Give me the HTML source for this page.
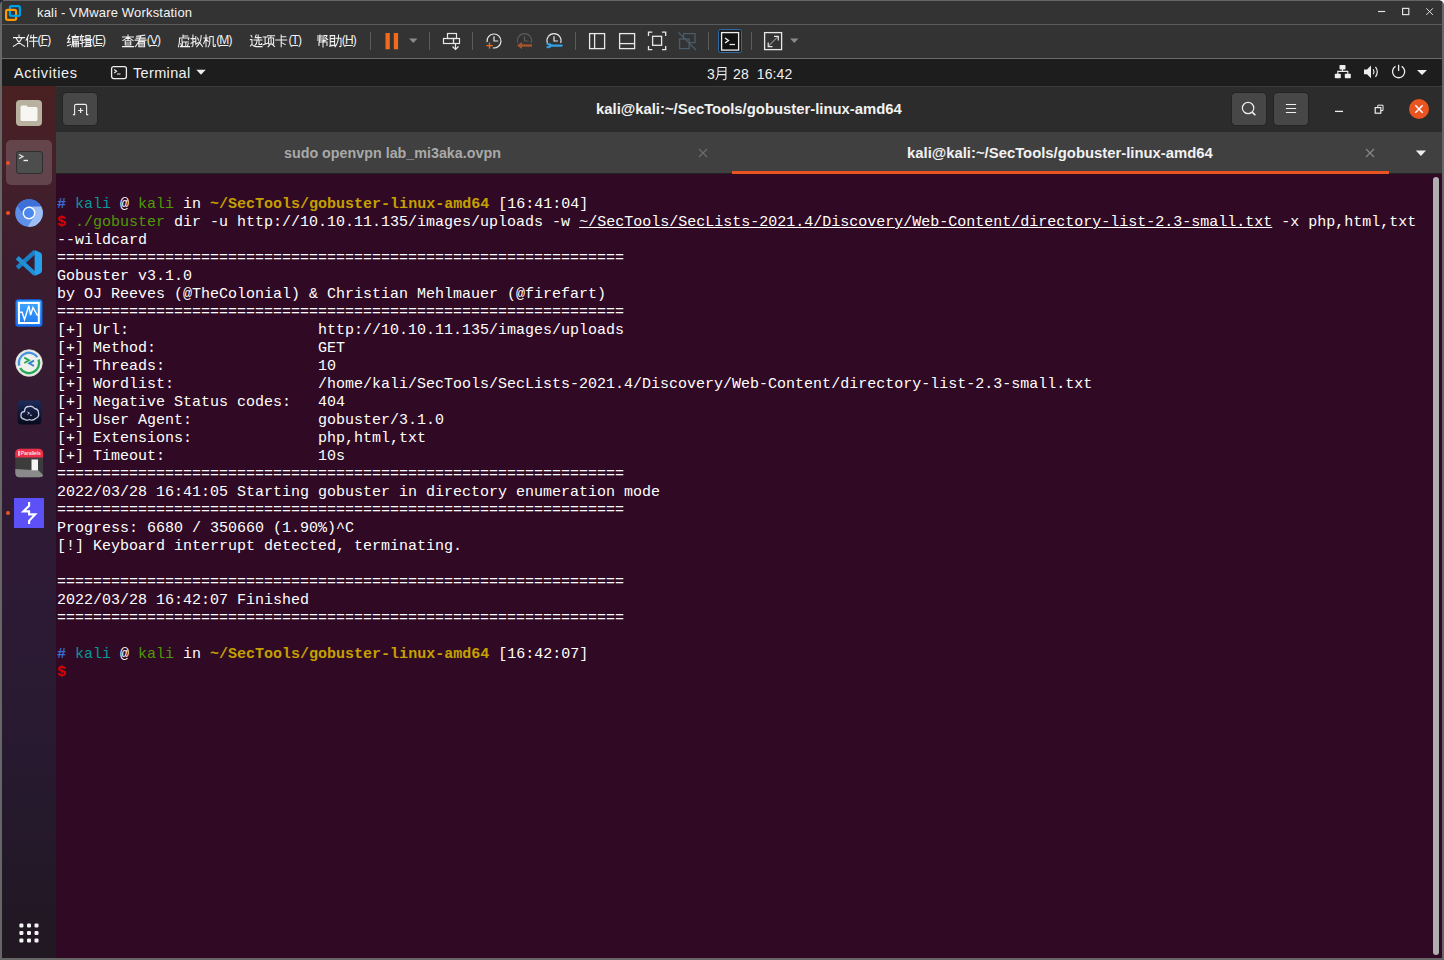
<!DOCTYPE html>
<html><head><meta charset="utf-8">
<style>
*{margin:0;padding:0;box-sizing:border-box}
html,body{width:1444px;height:960px;overflow:hidden;background:#666}
body{position:relative;font-family:"Liberation Sans",sans-serif;color:#fff}
.a{position:absolute}
#titlebar{left:2px;top:1px;width:1440px;height:23px;background:#333}
#sep1{left:2px;top:24px;width:1440px;height:1px;background:#5a5a5a}
#menubar{left:2px;top:25px;width:1440px;height:33px;background:#333}
#sep2{left:2px;top:58px;width:1440px;height:1px;background:#6a6a6a}
#gnome{left:2px;top:59px;width:1440px;height:27px;background:#1d1d1d}
#dock{left:2px;top:86px;width:54px;height:872px;background:linear-gradient(#4a2021 0%,#452029 8%,#3b1c2e 20%,#321a33 42%,#2e1a35 55%,#26192e 80%,#211822 100%)}
#header{left:56px;top:86px;width:1386px;height:46px;background:#2c2c2c}
#tabs{left:56px;top:132px;width:1386px;height:41px;background:#404040}
#term{left:56px;top:173px;width:1386px;height:785px;background:#300a24}
.t{font-family:"Liberation Mono",monospace;font-size:15px;letter-spacing:0px;line-height:18px;white-space:pre;color:#fff}
#txt{left:57px;top:196px}
.pb{color:#3a6cd0;font-weight:bold}.pc{color:#06989a}.pg{color:#4e9a06}.py{color:#c4a000;font-weight:bold}.pr{color:#dc0000;font-weight:bold}
u{text-decoration:underline;text-underline-offset:1px}
.ui{font-family:"Liberation Sans",sans-serif;white-space:pre;line-height:normal}
.menu{font-size:13px;color:#f2f2f2}
.cj{display:inline-block;overflow:hidden;vertical-align:top;white-space:nowrap}
.par{font-size:12px;color:#f2f2f2;letter-spacing:-0.9px}
.par u{text-decoration:underline;text-underline-offset:1px}
.menu u{text-decoration:underline;text-underline-offset:1px}
.btn{background:#474747;border-radius:4px;box-shadow:0 0 0 1px rgba(0,0,0,0.18)}
.dot{left:5.8px;width:4px;height:4px;border-radius:2px;background:#e95420}
</style></head><body>
<div class="a" id="titlebar"></div>
<div class="a" id="sep1"></div>
<div class="a" id="menubar"></div>
<div class="a" id="sep2"></div>
<div class="a" id="gnome"></div>
<div class="a" id="dock"></div>
<div class="a" id="header"></div>
<div class="a" id="tabs"></div>
<div class="a" style="left:56px;top:86px;width:1386px;height:1px;background:#3c3c3c"></div>
<div class="a" id="term"></div>
<div class="a t" id="txt"><span class="pb">#</span> <span class="pc">kali</span> @ <span class="pg">kali</span> in <span class="py">~/SecTools/gobuster-linux-amd64</span> [16:41:04]
<span class="pr">$</span> <span class="pg">./gobuster</span> dir -u http://10.10.11.135/images/uploads -w <u>~/SecTools/SecLists-2021.4/Discovery/Web-Content/directory-list-2.3-small.txt</u> -x php,html,txt
--wildcard
===============================================================
Gobuster v3.1.0
by OJ Reeves (@TheColonial) &amp; Christian Mehlmauer (@firefart)
===============================================================
[+] Url:                     http://10.10.11.135/images/uploads
[+] Method:                  GET
[+] Threads:                 10
[+] Wordlist:                /home/kali/SecTools/SecLists-2021.4/Discovery/Web-Content/directory-list-2.3-small.txt
[+] Negative Status codes:   404
[+] User Agent:              gobuster/3.1.0
[+] Extensions:              php,html,txt
[+] Timeout:                 10s
===============================================================
2022/03/28 16:41:05 Starting gobuster in directory enumeration mode
===============================================================
Progress: 6680 / 350660 (1.90%)^C
[!] Keyboard interrupt detected, terminating.

===============================================================
2022/03/28 16:42:07 Finished
===============================================================

<span class="pb">#</span> <span class="pc">kali</span> @ <span class="pg">kali</span> in <span class="py">~/SecTools/gobuster-linux-amd64</span> [16:42:07]
<span class="pr">$</span></div>

<!-- VMware title -->
<svg class="a" style="left:1438px;top:0" width="6" height="6" viewBox="0 0 6 6"><path d="M1.5 0 H6 V5 Q6 1.5 1.5 0 Z" fill="#f4f4f4"/></svg>
<svg class="a" style="left:0;top:0" width="28" height="24" viewBox="0 0 28 24">
<path d="M0 0 H3.5 Q1.2 1.2 0 3.5 Z" fill="#1e2430"/>
<rect x="9.9" y="6.1" width="10" height="9.8" rx="1.6" fill="none" stroke="#00a0e6" stroke-width="2.2"/>
<rect x="6.1" y="9.9" width="10" height="10" rx="1.6" fill="none" stroke="#ff9a00" stroke-width="2.2"/>
<path d="M14.6 15.9 H18.2" stroke="#00a0e6" stroke-width="2.2"/>
</svg>
<div class="a ui" style="left:37px;top:4.5px;font-size:13px;letter-spacing:0.18px;color:#f4f4f4">kali - VMware Workstation</div>
<svg class="a" style="left:1376px;top:5px" width="60" height="14" viewBox="0 0 60 14">
<path d="M2 6.5 H9.2" stroke="#e0e0e0" stroke-width="1.2"/>
<rect x="26.6" y="3.4" width="6.2" height="6.2" fill="none" stroke="#e0e0e0" stroke-width="1.2"/>
<path d="M50.3 3.3 L56.9 9.9 M56.9 3.3 L50.3 9.9" stroke="#e0e0e0" stroke-width="1"/>
</svg>
<!-- menu -->
<svg class="a" style="left:13.3px;top:35px;overflow:visible" width="27" height="13" viewBox="0 0 27 13"><g fill="none" stroke="#f2f2f2" stroke-width="1.05" stroke-linecap="square"><path transform="translate(0.00 0) scale(1.0)" d="M6 0 V1.6 M0.5 2.6 H11.5 M3 2.8 Q5.5 8.5 11.6 11.2 M9 2.8 Q6.5 8.5 0.4 11.2"/><path transform="translate(12.60 0) scale(1.0)" d="M3 0 L0.4 5.2 M2 3 V11.8 M5.6 0.4 L4.6 3.2 M5 2.6 H11.2 M4 6.2 H12 M8 0 V11.8"/></g></svg>
<div class="a ui par" style="left:37.6px;top:33px">(<u>F</u>)</div>
<svg class="a" style="left:67.3px;top:35px;overflow:visible" width="27" height="13" viewBox="0 0 27 13"><g fill="none" stroke="#f2f2f2" stroke-width="1.05" stroke-linecap="square"><path transform="translate(0.00 0) scale(1.0)" d="M2.6 0 L0.6 3.6 H3 L0.6 7.6 L3.6 7 M0.5 10.8 L3.8 9.4 M8.2 0 V1.2 M5 1.6 H11.6 M5.6 2.8 H11 V4.8 H5.6 M5.6 2.8 V7 Q5.5 10 4.6 11.8 M6.6 6.2 H11.4 V11.8 M6.6 6.2 V11.8 M8.2 6.2 V11.8 M9.8 6.2 V11.8 M6.6 8.8 H11.4"/><path transform="translate(12.60 0) scale(1.0)" d="M0.5 1.6 H4.2 M2 0 L0.6 5.2 H4.2 M2.6 3.2 V11.8 M0.4 8.4 L4.6 7.6 M6.2 0.6 H10.6 V3.2 H6.2 Z M5 4.6 H12 M6.4 5.8 H11 V11.4 M6.4 5.8 V11.4 M6.4 7.6 H11 M6.4 9.5 H11 M4.8 11.6 L12 10.8"/></g></svg>
<div class="a ui par" style="left:91.8px;top:33px">(<u>E</u>)</div>
<svg class="a" style="left:122.3px;top:35px;overflow:visible" width="27" height="13" viewBox="0 0 27 13"><g fill="none" stroke="#f2f2f2" stroke-width="1.05" stroke-linecap="square"><path transform="translate(0.00 0) scale(1.0)" d="M0.5 2 H11.5 M6 0 V5.2 M5.6 2.4 L0.8 5.6 M6.4 2.4 L11.2 5.6 M3.2 5.8 H8.8 V10 H3.2 Z M3.2 7.9 H8.8 M0.5 11.6 H11.5"/><path transform="translate(12.60 0) scale(1.0)" d="M10.2 0.2 L2 1.2 M1.6 3.1 H10.6 M0.5 5.1 H11.5 M6.2 1 Q4.5 7.5 0.8 11.6 M4.2 6.6 H10 V11.7 H4.2 Z M4.2 8.3 H10 M4.2 10 H10"/></g></svg>
<div class="a ui par" style="left:146.8px;top:33px">(<u>V</u>)</div>
<svg class="a" style="left:178.3px;top:35px;overflow:visible" width="40" height="13" viewBox="0 0 40 13"><g fill="none" stroke="#f2f2f2" stroke-width="1.05" stroke-linecap="square"><path transform="translate(0.00 0) scale(1.0)" d="M5 0 V2 M5 1 H9.8 M1.6 3 H11 L10.4 4.6 M1.6 3 Q1.6 8.5 0.4 11.8 M4 4.6 V7 H10.4 M4.4 8 V11.2 M7.8 8 V11.2 M2.8 8.6 L3.4 10.6 M10.2 8.6 L9.6 10.6 M2.4 11.6 H11.6"/><path transform="translate(12.60 0) scale(1.0)" d="M0.5 3.6 H4 M2.3 0 V10.8 L1.4 11.6 M0.4 8.2 L4.2 6.6 M5.2 1.6 V9.2 L7.6 7.6 M7 3 L7.9 5 M10.6 0.4 Q10.6 7 6 11.8 M9.4 8 L12 11.6"/><path transform="translate(25.20 0) scale(1.0)" d="M0.5 3 H5 M2.8 0 V11.8 M2.6 3.6 L0.4 8.6 M3 4.2 L5 6.4 M6.6 1.4 H10 V10.4 Q10 11.4 11 11.4 H12 V9.4 M6.6 1.4 V7 Q6.4 10 5 11.8"/></g></svg>
<div class="a ui par" style="left:216.2px;top:33px">(<u>M</u>)</div>
<svg class="a" style="left:250.3px;top:35px;overflow:visible" width="40" height="13" viewBox="0 0 40 13"><g fill="none" stroke="#f2f2f2" stroke-width="1.05" stroke-linecap="square"><path transform="translate(0.00 0) scale(1.0)" d="M1 0.4 L2 2 M0.4 4.6 H2 V9.2 L0.4 11 M2 9.6 Q3.6 11.6 6 11.6 H12 M6.2 0 L5.2 2.6 M5.4 2.6 H11 M8.2 0 V5 M4 5 H12 M7 5.4 Q7 9 5 10.2 M9 5.4 V9.4 H11.6 V8.4"/><path transform="translate(12.60 0) scale(1.0)" d="M0.5 2 H4.6 M2.5 2 V9 M0.4 9.8 L5 8.2 M5 0.8 H12 M8.6 0.8 L7.8 3 M6 3 H11 V9 H6 Z M8.5 4.6 V8.6 M7.6 9.4 L5.4 11.8 M9.6 9.4 L12 11.6"/><path transform="translate(25.20 0) scale(1.0)" d="M6 0 V11.8 M6 1.8 H10.6 M0.5 5 H11.5 M6 7.4 L10 9.6"/></g></svg>
<div class="a ui par" style="left:288.4px;top:33px">(<u>T</u>)</div>
<svg class="a" style="left:317.3px;top:35px;overflow:visible" width="27" height="13" viewBox="0 0 27 13"><g fill="none" stroke="#f2f2f2" stroke-width="1.05" stroke-linecap="square"><path transform="translate(0.00 0) scale(1.0)" d="M0.5 1 H5.6 M0.5 3 H5.6 M0.4 5 H6 M3 0 L2.6 6 M7 0.4 V6.4 M7 0.4 H10 L8.6 3 L10.6 4.4 L8 5.4 M2 7 V10.4 M2 7 H10 V10.4 M6 5.6 V12"/><path transform="translate(12.60 0) scale(1.0)" d="M0.6 0.6 H5 V10.2 H0.6 Z M0.6 3.6 H5 M0.6 6.6 H5 M0 11.2 L6 10.2 M6.4 3.2 H11.4 V11 Q11.4 11.8 10 11.6 M9 0 Q9 7.5 5.4 11.8"/></g></svg>
<div class="a ui par" style="left:341.8px;top:33px">(<u>H</u>)</div>
<svg class="a" style="left:360px;top:25px" width="450" height="32" viewBox="360 25 450 32">
<g stroke="#5a5a5a" stroke-width="1"><path d="M370.5 32 V50 M429.5 32 V50 M472.5 32 V50 M575.5 32 V50 M708.5 32 V50 M751.5 32 V50"/></g>
<rect x="385.5" y="33" width="4.3" height="16.3" fill="#f26b1d"/>
<rect x="393.8" y="33" width="4.3" height="16.3" fill="#f26b1d"/>
<path d="M409 38.5 H417.5 L413.25 43 Z" fill="#8a8a8a"/>
<path d="M797 38.5 H805.5 L801.25 43 Z" fill="#8a8a8a" transform="translate(-7 0)"/>
<!-- ctrl alt del -->
<g fill="none" stroke="#e8e8e8" stroke-width="1.2">
<rect x="447.5" y="33.5" width="9" height="5"/>
<rect x="443.5" y="38.5" width="10" height="5"/>
<rect x="453.5" y="38.5" width="6" height="5"/>
<path d="M455.5 44 V49.5 M452.5 46.5 L455.5 49.5 L458.5 46.5"/>
</g>
<!-- snapshot -->
<g fill="none" stroke="#e8e8e8" stroke-width="1.2">
<path d="M487.1 42.2 A7 7 0 1 1 492.8 47.9"/><path d="M494 36.3 V41 H498.2"/>
</g>
<path d="M486.3 45.6 H492.7 M489.5 42.4 V48.8" stroke="#f26b1d" stroke-width="1.3"/>
<g fill="none" stroke="#5a5a5a" stroke-width="1.2">
<path d="M517.9 42.9 A7 7 0 1 1 531.1 42.9"/><path d="M524.5 36.3 V41 H528.5"/>
</g>
<path d="M521 45.5 H532" stroke="#a8532a" stroke-width="2.4"/><path d="M517 45.5 L522 42 V49 Z" fill="#a8532a"/>
<g fill="none" stroke="#e8e8e8" stroke-width="1.2">
<path d="M547.4 42.9 A7 7 0 1 1 560.6 42.9"/><path d="M554 36.3 V41 H558"/>
</g>
<path d="M550 45.6 H561.5" stroke="#2fa3e6" stroke-width="2.4" stroke-linecap="round"/><path d="M546.6 44 Q550.5 43.6 551 45.6 Q550.5 47.6 546.6 47.2" stroke="#2fa3e6" stroke-width="1.9" fill="none"/>
<!-- view icons -->
<g fill="none" stroke="#e8e8e8" stroke-width="1.3">
<rect x="589.6" y="33.6" width="15" height="15"/><path d="M594.6 33.6 V48.6"/>
<rect x="619.6" y="33.6" width="15" height="15"/><path d="M619.6 43.6 H634.6"/>
<path d="M648.5 36 V32.2 H652.3 M662 32.2 H665.7 V36 M665.7 46 V49.7 H662 M652.3 49.7 H648.5 V46"/>
<rect x="652.6" y="36.3" width="9" height="9"/>
</g>
<g fill="none" stroke="#4a5c6c" stroke-width="1.3">
<path d="M683.5 38.8 V33.6 H695 V42.6 H689.3"/><rect x="679.6" y="39" width="9.6" height="9.6"/><path d="M678.5 32.5 L696 50"/>
</g>
<rect x="718.5" y="29.5" width="23" height="23" rx="2" fill="#1d1d1d" stroke="#2d6ba6" stroke-width="1"/>
<rect x="721.6" y="32.6" width="17" height="17.5" fill="#111" stroke="#eee" stroke-width="1.3"/>
<path d="M725 38 L728.5 40.5 L725 43" fill="none" stroke="#eee" stroke-width="1.4"/><path d="M729.5 44.5 H735" stroke="#eee" stroke-width="1.2"/>
<g fill="none" stroke="#e8e8e8" stroke-width="1.3">
<rect x="764.6" y="32.6" width="17" height="17"/>
</g>
<path d="M768.5 46 L777.8 36.8" stroke="#bbb" stroke-width="1"/>
<path d="M774 36.3 H778.3 V40.6 M768.2 42.5 V46.7 H772.5" fill="none" stroke="#e8e8e8" stroke-width="1.2"/>
</svg>
<!-- gnome bar -->
<div class="a ui" style="left:14px;top:65px;font-size:14.5px;letter-spacing:0.65px;color:#f0f0f0">Activities</div>
<svg class="a" style="left:110px;top:65px" width="18" height="15" viewBox="0 0 18 15">
<rect x="1.6" y="1.6" width="14.8" height="12" rx="2" fill="none" stroke="#eee" stroke-width="1.3"/>
<path d="M4.2 4.5 L6.6 6.3 L4.2 8" fill="none" stroke="#eee" stroke-width="1.1"/><path d="M7 9 H10.5" stroke="#eee" stroke-width="1"/>
</svg>
<div class="a ui" style="left:133px;top:65px;font-size:14.5px;letter-spacing:0.35px;color:#f0f0f0">Terminal</div>
<svg class="a" style="left:195px;top:69px" width="12" height="7" viewBox="0 0 12 7"><path d="M1.3 0.7 H10.7 L6 5.8 Z" fill="#eee"/></svg>
<div class="a ui" style="left:707px;top:65.6px;font-size:14px;color:#f0f0f0">3</div>
<svg class="a" style="left:715px;top:67px" width="13" height="14" viewBox="0 0 13 14"><path d="M3 0.5 V7 Q3 10.5 0.6 12.8 M3 0.5 H10.9 V11.6 Q10.9 12.9 7.8 12.7 M3 4.3 H10.9 M3 7.6 H10.9" fill="none" stroke="#f0f0f0" stroke-width="1.1"/></svg>
<div class="a ui" style="left:733px;top:65.6px;font-size:14px;color:#f0f0f0;letter-spacing:0.1px">28&nbsp; 16:42</div>
<svg class="a" style="left:1330px;top:62px" width="104" height="20" viewBox="1330 62 104 20">
<g fill="#eee">
<rect x="1339.5" y="65" width="6" height="4.5" rx="0.8"/>
<rect x="1334.8" y="73.8" width="6" height="4.5" rx="0.8"/>
<rect x="1344.8" y="73.8" width="6" height="4.5" rx="0.8"/>
</g>
<path d="M1342.5 69 V71.4 M1337.8 74 V71.4 H1347.8 V74" fill="none" stroke="#eee" stroke-width="1.1"/>
<path d="M1364 69.5 H1367 L1371 65.5 V78.2 L1367 74.2 H1364 Z" fill="#eee"/>
<path d="M1373.2 69.3 Q1374.8 71.8 1373.2 74.3 M1375.5 66.8 Q1379 71.8 1375.5 76.8" fill="none" stroke="#eee" stroke-width="1.2"/>
<path d="M1395.5 66.4 A6.1 6.1 0 1 0 1401.7 66.4" fill="none" stroke="#eee" stroke-width="1.3"/>
<path d="M1398.6 64.8 V71" stroke="#eee" stroke-width="1.3"/>
<path d="M1417 70 H1427 L1422 75 Z" fill="#eee"/>
</svg>
<!-- header bar -->
<div class="a btn" style="left:63px;top:93px;width:34px;height:32px"></div>
<svg class="a" style="left:63px;top:93px" width="34" height="32" viewBox="0 0 34 32">
<path d="M9.9 21.6 H11.6 V13 Q11.6 11.4 13.2 11.4 H22 Q23.6 11.4 23.6 13 V21.6 H25.3" fill="none" stroke="#eee" stroke-width="1.1"/>
<path d="M17.6 14.9 V20.1 M15 17.5 H20.2" stroke="#eee" stroke-width="1.2"/>
</svg>
<div class="a ui" style="left:596px;top:101px;font-size:14.85px;font-weight:bold;color:#f2f2f2">kali@kali:~/SecTools/gobuster-linux-amd64</div>
<div class="a btn" style="left:1232px;top:93px;width:34px;height:32px"></div>
<div class="a btn" style="left:1274px;top:93px;width:34px;height:32px"></div>
<svg class="a" style="left:1232px;top:93px" width="200" height="32" viewBox="1232 93 200 32">
<circle cx="1248.1" cy="108" r="5.7" fill="none" stroke="#eee" stroke-width="1.2"/>
<path d="M1252.2 112.1 L1255.4 115.3" stroke="#eee" stroke-width="1.6"/>
<path d="M1285.9 104.5 H1296.1 M1285.9 108.5 H1296.1 M1285.9 112.5 H1296.1" stroke="#f0f0f0" stroke-width="1.1"/>
<path d="M1335 111.4 H1343" stroke="#eee" stroke-width="1.3"/>
<rect x="1375.2" y="107.6" width="5.6" height="5.6" fill="none" stroke="#eee" stroke-width="1.2"/>
<path d="M1377.8 107.6 V105.2 H1383 V110.6 H1380.8" fill="none" stroke="#eee" stroke-width="1"/>
<circle cx="1419" cy="109" r="10" fill="#e95420"/>
<path d="M1415.3 105.3 L1422.7 112.7 M1422.7 105.3 L1415.3 112.7" stroke="#fff" stroke-width="1.5"/>
</svg>
<!-- tabs -->
<div class="a ui" style="left:284px;top:145px;font-size:14.3px;font-weight:bold;color:#a9a9a9">sudo openvpn lab_mi3aka.ovpn</div>
<div class="a ui" style="left:907px;top:145px;font-size:14.85px;font-weight:bold;color:#f2f2f2">kali@kali:~/SecTools/gobuster-linux-amd64</div>
<svg class="a" style="left:690px;top:140px" width="750" height="34" viewBox="690 140 750 34">
<path d="M699 149 L707 157 M707 149 L699 157" stroke="#6d6d6d" stroke-width="1.1"/>
<path d="M1366 149 L1374 157 M1374 149 L1366 157" stroke="#8a8a8a" stroke-width="1.1"/>
<path d="M1415.8 150.4 H1426 L1420.9 155.9 Z" fill="#eee"/>
<rect x="732" y="171" width="657" height="3" fill="#e95420"/>
</svg>
<div class="a" style="left:56px;top:173px;width:676px;height:1px;background:#222"></div>
<div class="a" style="left:1389px;top:173px;width:53px;height:1px;background:#222"></div>
<!-- scrollbar -->
<div class="a" style="left:1433px;top:177px;width:6px;height:778px;border-radius:3px;background:#b0b0b0"></div>
<!-- dock -->
<div class="a" style="left:16px;top:100px;width:26px;height:26px;border-radius:4px;background:#b9b19f"></div>
<svg class="a" style="left:16px;top:100px" width="26" height="26" viewBox="0 0 26 26">
<path d="M4.5 7 Q4.5 5.5 6 5.5 H10.5 L12 7 H20 Q21.5 7 21.5 8.5 V19.5 Q21.5 21 20 21 H6 Q4.5 21 4.5 19.5 Z" fill="#f7f6f3"/>
</svg>
<div class="a" style="left:6px;top:140px;width:46px;height:45px;border-radius:5px;background:rgba(255,255,255,0.17)"></div>
<div class="a" style="left:15.5px;top:151px;width:27px;height:23px;border-radius:3px;background:#4d4d4d;border:1px solid #2e2e2e"></div>
<svg class="a" style="left:15px;top:151px" width="28" height="23" viewBox="0 0 28 23">
<path d="M4 3.5 L8 5.6 L4 7.7" fill="none" stroke="#ddd" stroke-width="1.3"/><path d="M8.5 9.5 H13" stroke="#eee" stroke-width="1.4"/>
</svg>
<div class="a dot" style="top:161px"></div>


<!-- dock icons -->
<div class="a dot" style="top:211px"></div>
<svg class="a" style="left:15px;top:199px" width="28" height="28" viewBox="0 0 28 28">
<circle cx="14" cy="14" r="13.8" fill="#5f90e9"/>
<path d="M2.25 6.77 A13.8 13.8 0 0 1 26.22 7.59 L14 7.7 L8.3 15.5 Z" fill="#3f70d8"/>
<path d="M26.22 7.59 A13.8 13.8 0 0 1 12.80 27.75 L18.2 19.1 L14 7.7 Z" fill="#9dbef4"/>
<circle cx="14" cy="14" r="6.4" fill="#fff"/>
<circle cx="14" cy="14" r="5" fill="#4a88ee"/>
</svg>
<svg class="a" style="left:15px;top:249px" width="28" height="28" viewBox="0 0 28 28">
<path d="M2.2 18.8 L20 2.5" stroke="#1a7fc4" stroke-width="4.4"/>
<path d="M2.2 8.6 L20 25" stroke="#1f8fd6" stroke-width="4.4"/>
<path d="M19.6 1 L25.2 3.6 Q27 4.4 27 6.4 V21.6 Q27 23.6 25.2 24.4 L19.6 27 Z" fill="#24a0ee"/>
</svg>
<svg class="a" style="left:15px;top:299px" width="28" height="28" viewBox="0 0 28 28">
<defs><linearGradient id="mg" x1="0" y1="0" x2="0" y2="1"><stop offset="0" stop-color="#42aaff"/><stop offset="1" stop-color="#1f78f0"/></linearGradient></defs>
<rect x="0.3" y="0.2" width="27.2" height="27.6" rx="3" fill="#1565e8"/>
<rect x="1.5" y="1.5" width="24.8" height="25" rx="2" fill="url(#mg)"/>
<rect x="4" y="4" width="19.8" height="20" fill="none" stroke="#fff" stroke-width="2"/>
<path d="M4.4 13.2 H7.2 L9.5 20.7 L13.8 6.7 L15.6 16 L18 8.5 L22.2 16 H24" fill="none" stroke="#fff" stroke-width="1.4" stroke-linejoin="miter"/>
</svg>
<svg class="a" style="left:15px;top:349px" width="28" height="28" viewBox="0 0 28 28">
<circle cx="14" cy="14" r="13.3" fill="#eef0ea" stroke="#d6d8d2" stroke-width="0.8"/>
<path d="M4.15 16.64 A10.2 10.2 0 0 1 22.36 8.15" fill="none" stroke="#4a94e0" stroke-width="2.4"/>
<path d="M23.58 10.51 A10.2 10.2 0 0 1 5.17 19.10" fill="none" stroke="#2aa85a" stroke-width="2.4"/>
<path d="M9.3 8.6 L14 11.3 L9.3 14" fill="none" stroke="#2aa85a" stroke-width="1.9"/>
<path d="M19 11.6 L14.2 14.3 L19 17" fill="none" stroke="#3a7fd6" stroke-width="1.9"/>
</svg>
<svg class="a" style="left:17px;top:400px" width="25" height="25" viewBox="0 0 25 25">
<defs><linearGradient id="cg" x1="0" y1="0" x2="0" y2="1"><stop offset="0" stop-color="#1d2b5a"/><stop offset="1" stop-color="#060a1c"/></linearGradient></defs>
<rect x="0.5" y="0.5" width="24" height="24" rx="4" fill="url(#cg)"/>
<path d="M7 19 Q3.5 18.5 4 14.5 Q4.5 11.5 7.5 11.5 Q7.5 6.5 12 6.5 Q15.5 5.5 17.5 8.5 Q21.5 9 21.5 13 Q22.5 17 18.5 18.5 Q16 21 12.5 19.5 Q9.5 21 7 19 Z" fill="none" stroke="#c9cde0" stroke-width="1.3"/>
<path d="M10.5 12 L12.5 13.2 L10.5 14.4 M13 15.2 H14.8" stroke="#c9cde0" stroke-width="1" fill="none"/>
</svg>
<svg class="a" style="left:15px;top:448px" width="29" height="30" viewBox="0 0 29 30">
<rect x="0.3" y="0.8" width="27.8" height="28.4" rx="4.5" fill="#3c3c3c"/>
<path d="M0.3 21 L16.5 22 H23 L28.1 27 Q28 29.2 24 29.2 H4.5 Q0.3 29.2 0.3 25 Z" fill="#8a8a8a"/>
<path d="M0.3 9.5 V5.3 Q0.3 0.8 4.8 0.8 H23.6 Q28.1 0.8 28.1 5.3 V9.5 Z" fill="#ec2e4a"/>
<rect x="3.3" y="2.8" width="1.3" height="5" fill="#fff"/>
<text x="5.6" y="7.4" font-family="Liberation Sans" font-size="5.4" fill="#fff" textLength="20">Parallels</text>
<rect x="16.5" y="11.5" width="6.5" height="10.8" fill="#f4f4f4"/>
</svg>
<div class="a dot" style="top:511px"></div>
<svg class="a" style="left:14px;top:498px" width="30" height="30" viewBox="0 0 30 30">
<rect x="0" y="0" width="30" height="30" fill="#5b51f6"/>
<path d="M15.1 4 V7.8 L9.3 13.4 H15.1 V16.4 H21.2 L15.1 22.8 V26" fill="none" stroke="#fff" stroke-width="2.1" stroke-linejoin="miter"/>
</svg>
<svg class="a" style="left:17px;top:921px" width="24" height="24" viewBox="0 0 24 24">
<g fill="#f4f4f4">
<rect x="2.4" y="2.4" width="4" height="4" rx="1.2"/><rect x="10" y="2.4" width="4" height="4" rx="1.2"/><rect x="17.5" y="2.4" width="4" height="4" rx="1.2"/>
<rect x="2.4" y="9.9" width="4" height="4" rx="1.2"/><rect x="10" y="9.9" width="4" height="4" rx="1.2"/><rect x="17.5" y="9.9" width="4" height="4" rx="1.2"/>
<rect x="2.4" y="17.4" width="4" height="4" rx="1.2"/><rect x="10" y="17.4" width="4" height="4" rx="1.2"/><rect x="17.5" y="17.4" width="4" height="4" rx="1.2"/>
</g>
</svg>

</body></html>
